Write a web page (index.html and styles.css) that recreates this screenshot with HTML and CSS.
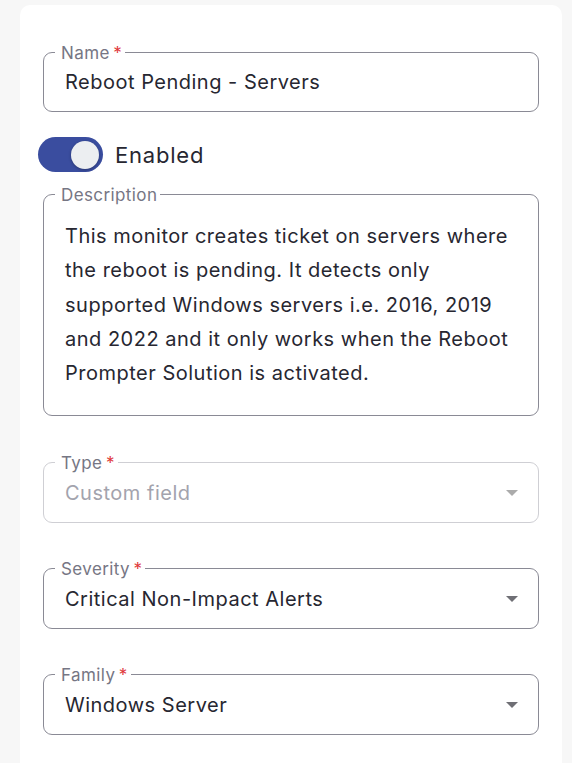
FILE: index.html
```html
<!DOCTYPE html>
<html lang="en">
<head>
<meta charset="utf-8">
<title>Monitor</title>
<link rel="stylesheet" href="styles.css">
</head>
<body>
<main class="page">
  <form class="card">
    <fieldset class="field">
      <legend class="label">Name<span class="req">&thinsp;*</span></legend>
      <div class="value">Reboot Pending - Servers</div>
    </fieldset>

    <div class="switch-row">
      <span class="switch"><span class="thumb"></span></span>
      <span class="switch-label">Enabled</span>
    </div>

    <fieldset class="field desc">
      <legend class="label">Description</legend>
      <div class="desc-text">This monitor creates ticket on servers where the reboot is pending. It detects only supported Windows servers i.e. 2016, 2019 and 2022 and it only works when the Reboot Prompter Solution is activated.</div>
    </fieldset>

    <fieldset class="field select disabled first-select">
      <legend class="label">Type<span class="req">&thinsp;*</span></legend>
      <div class="value"><span>Custom field</span><svg class="arrow" width="12" height="6" viewBox="0 0 12 6"><path d="M0 0h12L6 6z"/></svg></div>
    </fieldset>

    <fieldset class="field select">
      <legend class="label">Severity<span class="req">&thinsp;*</span></legend>
      <div class="value"><span>Critical Non-Impact Alerts</span><svg class="arrow" width="12" height="6" viewBox="0 0 12 6"><path d="M0 0h12L6 6z"/></svg></div>
    </fieldset>

    <fieldset class="field select">
      <legend class="label">Family<span class="req">&thinsp;*</span></legend>
      <div class="value"><span>Windows Server</span><svg class="arrow" width="12" height="6" viewBox="0 0 12 6"><path d="M0 0h12L6 6z"/></svg></div>
    </fieldset>
  </form>
</main>
</body>
</html>
```
FILE: styles.css
```css
html, body {
  margin: 0;
  padding: 0;
  background: #f7f7f7;
  font-family: "Inter", "Noto Sans", sans-serif;
  color: #272731;
}

.page {
  padding: 5px 10px 0 20px;
  height: 758px;
  overflow: hidden;
}

.card {
  background: #ffffff;
  border-radius: 10px;
  padding: 38px 23px 40px;
  min-height: 760px;
  display: flex;
  flex-direction: column;
}

.field {
  margin: 0;
  padding: 0;
  min-width: 0;
  border: 1px solid #8a8a95;
  border-radius: 9px;
}

.label {
  margin-left: 11px;
  padding: 2px 3px 0 6px;
  font-size: 17px;
  line-height: 17px;
  letter-spacing: 0.4px;
  color: #767684;
}

.req {
  color: #e0383a;
}

.value {
  display: flex;
  align-items: center;
  justify-content: space-between;
  padding: 8px 20px 17px 21px;
  font-size: 20px;
  line-height: 24px;
  letter-spacing: 0.5px;
}

.select .value {
  padding-top: 9px;
}

.arrow {
  fill: #6f6f75;
  flex: none;
}

.switch-row {
  display: flex;
  align-items: center;
  gap: 12px;
  margin: 25px 0 13px -5px;
}

.switch {
  width: 65px;
  height: 35px;
  border-radius: 18px;
  background: #3a4d9f;
  display: flex;
  align-items: center;
  justify-content: flex-end;
  padding-right: 4px;
  box-sizing: border-box;
}

.thumb {
  width: 28px;
  height: 28px;
  border-radius: 50%;
  background: #eceef1;
  box-shadow: 0 1px 3px rgba(0, 0, 0, 0.3);
}

.switch-label {
  font-size: 22px;
  line-height: 26px;
  letter-spacing: 0.8px;
}

.desc-text {
  padding: 15px 20px 25px 21px;
  font-size: 20px;
  line-height: 34.3px;
  letter-spacing: 0.5px;
}

.first-select {
  margin-top: 37px;
}

.select + .select {
  margin-top: 36px;
}

.disabled {
  border-color: #cfcfd4;
}

.disabled .value {
  color: #a3a3ad;
}

.disabled .arrow {
  fill: #ababab;
}
```
